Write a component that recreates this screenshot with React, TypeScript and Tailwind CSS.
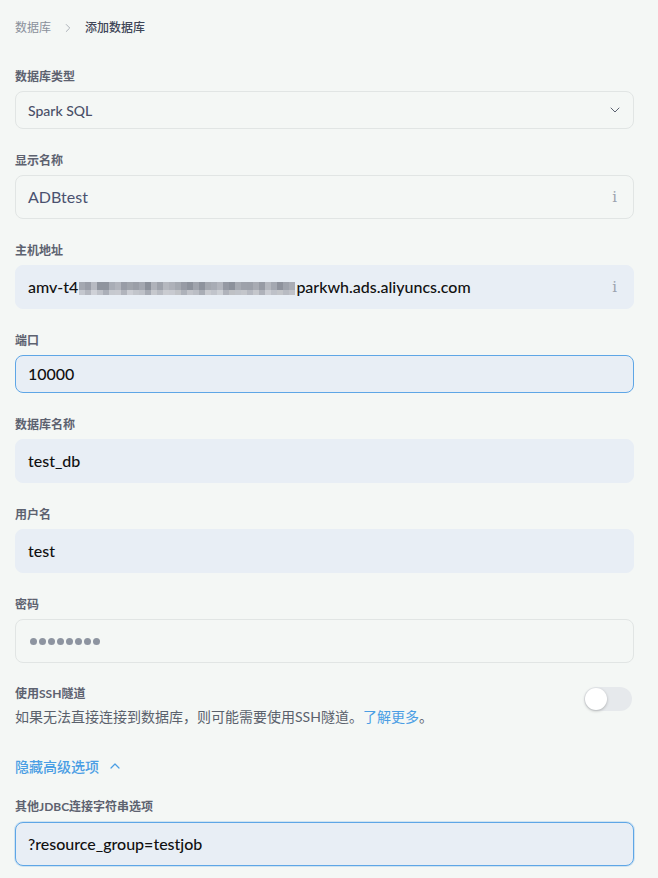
import { ChevronDown, ChevronRight, ChevronUp } from 'lucide-react';

const font = { fontFamily: 'Lato, "Noto Sans CJK SC", sans-serif' };

// pixelated (mosaic) part of the host name
const mosaicTop = ['#a4a8b1', '#9a9ea8', '#b7bac2', '#8f949e', '#8f949e', '#a9adb6', '#b2b5bd', '#989ca6', '#a0a4ac', '#9a9ea7', '#a3a7b0', '#8b909a', '#afb2ba', '#9ea2ab', '#b5b8bf', '#aeb1b9', '#a5a9b1', '#979ba5', '#8d929c', '#a0a4ad', '#8e939d', '#a4a8b0', '#a8acb5', '#b3b6be', '#9599a3', '#8c919b', '#a6aab2', '#9d a1aa'.replace(' ', ''), '#9ca0a9', '#a8abb3', '#979ba4', '#b5b8bf', '#a4a8b1', '#8e929c', '#9fa3ac', '#a9acb4'];
const mosaicBottom = ['#c4c7ce', '#b4b7bf', '#cfd1d7', '#bfc2c9', '#abafb8', '#c6c9cf', '#c8cad0', '#b1b4bc', '#ccced4', '#c2c5cb', '#bec1c8', '#a7abb4', '#c6c8cd', '#b9bcc3', '#cacce1'.replace('e1', 'd1'), '#c8cad0', '#c1c3c7', '#aeb2ba', '#c2c4ca', '#bbbec5', '#a9adb5', '#c9cbd0', '#c1c4cb', '#cdd0d5', '#b0b3bb', '#bfc1c5', '#c0c3c9', '#c4c6cb', '#b6b9c1', '#c5c7cc', '#afb2ba', '#cbcdd3', '#bec1c8', '#c3c5c9', '#b8bbc2', '#c0c2c8'];

function Label({ children }: { children: React.ReactNode }) {
  return (
    <div className="h-4 mb-2 text-[12px] leading-5 font-bold text-[#5d6270]">{children}</div>
  );
}

function InfoMark() {
  return (
    <span className="text-[15px] leading-none text-[#9ca3ae]" style={{ fontFamily: '"DejaVu Serif", serif' }}>
      i
    </span>
  );
}

export default function App() {
  return (
    <div className="min-h-[878px] bg-[#f4f7f5] pl-[15px] pr-[24px] pt-[20px]" style={font}>
      {/* Breadcrumb */}
      <div className="flex items-center h-4 text-[12px] leading-4">
        <span className="text-[#8a909b]">数据库</span>
        <ChevronRight className="mx-[10px] w-[14px] h-[14px] text-[#a2a8b0]" strokeWidth={1.5} />
        <span className="text-[#3f4658] font-medium">添加数据库</span>
      </div>

      <div className="mt-[31px]">
        <Label>数据库类型</Label>
        <div className="flex items-center justify-between h-[38px] rounded-lg border border-[#e1e5e4] pl-3 pr-[10px] text-[14px] font-medium text-[#4a5068]">
          <span>Spark SQL</span>
          <ChevronDown className="w-4 h-4 text-[#5b6170]" strokeWidth={1.5} />
        </div>
      </div>

      <div className="mt-[22px]">
        <Label>显示名称</Label>
        <div className="flex items-center justify-between h-[44px] rounded-lg border border-[#e1e5e4] pl-3 pr-[16px] text-[16px] text-[#4a5270]">
          <span>ADBtest</span>
          <InfoMark />
        </div>
      </div>

      <div className="mt-[22px]">
        <Label>主机地址</Label>
        <div className="flex items-center justify-between h-[44px] rounded-lg border border-[#e8eef5] bg-[#e8eef5] pl-3 pr-[16px] text-[16px] font-medium text-[#111]">
          <span className="flex items-center">
            amv-t4
            <span className="flex flex-col w-[216px] mx-[1px] mt-[2px]">
              <span className="flex h-[8px]">
                {mosaicTop.map((c, i) => (
                  <span key={i} className="w-[6px] h-full" style={{ background: c }} />
                ))}
              </span>
              <span className="flex h-[5px]">
                {mosaicBottom.map((c, i) => (
                  <span key={i} className="w-[6px] h-full" style={{ background: c }} />
                ))}
              </span>
            </span>
            parkwh.ads.aliyuncs.com
          </span>
          <InfoMark />
        </div>
      </div>

      <div className="mt-[22px]">
        <Label>端口</Label>
        <div className="flex items-center h-[38px] rounded-lg border border-[#5ea6e6] bg-[#e8eef5] pl-3 text-[16px] font-medium text-[#111]">
          10000
        </div>
      </div>

      <div className="mt-[22px]">
        <Label>数据库名称</Label>
        <div className="flex items-center h-[44px] rounded-lg border border-[#e8eef5] bg-[#e8eef5] pl-3 text-[16px] font-medium text-[#111]">
          test_db
        </div>
      </div>

      <div className="mt-[22px]">
        <Label>用户名</Label>
        <div className="flex items-center h-[44px] rounded-lg border border-[#e8eef5] bg-[#e8eef5] pl-3 text-[16px] font-medium text-[#111]">
          test
        </div>
      </div>

      <div className="mt-[22px]">
        <Label>密码</Label>
        <div className="flex items-center gap-[2px] h-[44px] rounded-lg border border-[#e1e5e4] pl-[14px]">
          {Array.from({ length: 8 }).map((_, i) => (
            <span key={i} className="w-[7px] h-[7px] rounded-full bg-[#8d94a0]" />
          ))}
        </div>
      </div>

      {/* SSH tunnel */}
      <div className="mt-[21px] flex items-start justify-between">
        <div>
          <Label>使用SSH隧道</Label>
          <div className="text-[14px] leading-5 text-[#5a616c] -mt-[1px]">
            如果无法直接连接到数据库，则可能需要使用SSH隧道。<span className="text-[#4a9ee4]">了解更多</span>。
          </div>
        </div>
        <div className="mt-[3px] mr-[2px] w-[48px] h-[24px] rounded-full bg-[#e6e9ec] flex items-center px-[1px]">
          <span className="w-[22px] h-[22px] rounded-full bg-white shadow-[0_1px_3px_rgba(0,0,0,0.25)]" />
        </div>
      </div>

      <div className="mt-[29px] flex items-center h-5 text-[14px] font-medium text-[#4a9ee4]">
        隐藏高级选项
        <ChevronUp className="ml-[8px] w-[16px] h-[16px]" strokeWidth={1.8} />
      </div>

      <div className="mt-[21px]">
        <div className="h-4 mb-[9px] text-[12px] leading-5 font-bold text-[#5d6270]">其他JDBC连接字符串选项</div>
        <div className="flex items-center h-[44px] rounded-lg border border-[#5ea6e6] bg-[#e8eef5] pl-3 text-[16px] font-medium text-[#111] shadow-[0_0_0_1px_rgba(94,166,230,0.25)]">
          ?resource_group=testjob
        </div>
      </div>
    </div>
  );
}
